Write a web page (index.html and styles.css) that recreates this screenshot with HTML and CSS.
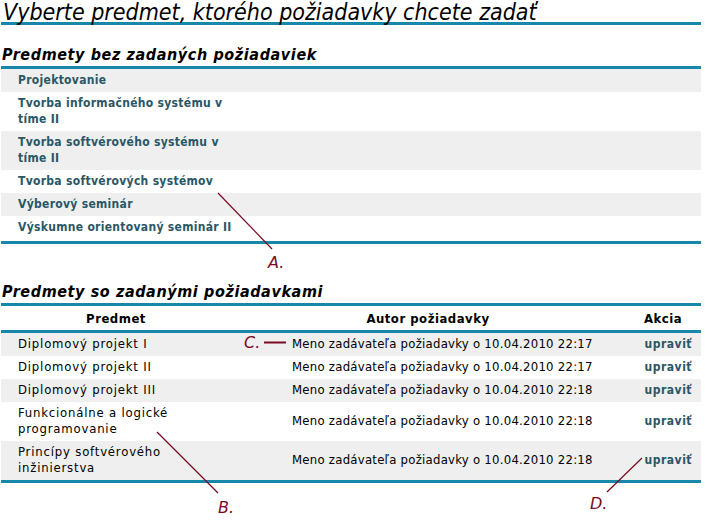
FILE: index.html
```html
<!DOCTYPE html>
<html lang="sk">
<head>
<meta charset="utf-8">
<title>Požiadavky</title>
<link rel="stylesheet" href="styles.css">
</head>
<body>
<div class="page">
  <h1 class="title">Vyberte predmet, ktorého požiadavky chcete zadať</h1>

  <h2 class="section">Predmety bez zadaných požiadaviek</h2>
  <table class="list">
    <tr class="odd"><td><a href="#">Projektovanie</a></td></tr>
    <tr><td><a href="#">Tvorba informačného systému v tíme II</a></td></tr>
    <tr class="odd"><td><a href="#">Tvorba softvérového systému v tíme II</a></td></tr>
    <tr><td><a href="#">Tvorba softvérových systémov</a></td></tr>
    <tr class="odd"><td><a href="#">Výberový seminár</a></td></tr>
    <tr class="last"><td><a href="#">Výskumne orientovaný seminár II</a></td></tr>
  </table>

  <h2 class="section second">Predmety so zadanými požiadavkami</h2>
  <table class="req">
    <thead>
      <tr><th class="c1">Predmet</th><th class="c2">Autor požiadavky</th><th class="c3">Akcia</th></tr>
    </thead>
    <tbody>
      <tr class="odd"><td class="c1">Diplomový projekt I</td><td class="c2">Meno zadávateľa požiadavky<span class="sp">o 10.04.2010 22:17</span></td><td class="c3"><a href="#">upraviť</a></td></tr>
      <tr><td class="c1">Diplomový projekt II</td><td class="c2">Meno zadávateľa požiadavky<span class="sp">o 10.04.2010 22:17</span></td><td class="c3"><a href="#">upraviť</a></td></tr>
      <tr class="odd"><td class="c1">Diplomový projekt III</td><td class="c2">Meno zadávateľa požiadavky<span class="sp">o 10.04.2010 22:18</span></td><td class="c3"><a href="#">upraviť</a></td></tr>
      <tr><td class="c1">Funkcionálne a logické programovanie</td><td class="c2">Meno zadávateľa požiadavky<span class="sp">o 10.04.2010 22:18</span></td><td class="c3"><a href="#">upraviť</a></td></tr>
      <tr class="odd"><td class="c1">Princípy softvérového inžinierstva</td><td class="c2">Meno zadávateľa požiadavky<span class="sp">o 10.04.2010 22:18</span></td><td class="c3"><a href="#">upraviť</a></td></tr>
    </tbody>
  </table>

  <svg class="notes" width="705" height="527" viewBox="0 0 705 527">
    <g stroke="#7a0a22" fill="none">
      <line x1="218" y1="193" x2="272" y2="249" stroke-width="1.2"/>
      <line x1="264" y1="342.5" x2="286" y2="342.5" stroke-width="2"/>
      <line x1="157" y1="432" x2="218" y2="493" stroke-width="1.2"/>
      <line x1="642" y1="458" x2="607" y2="492" stroke-width="1.2"/>
    </g>
  </svg>
  <span class="note n-a">A.</span>
  <span class="note n-b">B.</span>
  <span class="note n-c">C.</span>
  <span class="note n-d">D.</span>
</div>
</body>
</html>
```
FILE: styles.css
```css
html, body {
  margin: 0;
  padding: 0;
  background: #fff;
}
body {
  font-family: "DejaVu Sans Condensed", "DejaVu Sans", sans-serif;
  color: #000;
}
.page {
  position: relative;
  width: 705px;
  height: 527px;
}
.title {
  margin: 0 4px 0 1px;
  padding: 2px 0 0 2px;
  height: 20px;
  font-size: 23px;
  line-height: 20px;
  font-weight: normal;
  font-style: italic;
  border-bottom: 3px solid #1788aa;
}
.section {
  margin: 19px 4px 0 1px;
  padding: 0 0 0 1px;
  height: 22px;
  font-size: 16px;
  line-height: 22px;
  font-weight: bold;
  font-style: italic;
  letter-spacing: 0.6px;
  border-bottom: 3px solid #1788aa;
}
.section.second {
  margin-top: 37px;
  height: 22px;
}
table {
  border-collapse: collapse;
  border-spacing: 0;
}
.list {
  margin: 0 4px 0 1px;
  width: 700px;
  border-bottom: 3px solid #1788aa;
}
.list td {
  padding: 3px 2px 4px 17px;
  font-size: 12px;
  line-height: 16px;
  font-weight: bold;
  letter-spacing: 0.3px;
}
.list td a {
  display: block;
  width: 230px;
}
.list tr.odd td { background: #efefef; }
.list tr.last td { padding-bottom: 6px; }
a { color: #2a5766; text-decoration: none; }
.req {
  margin: 0 4px 0 1px;
  width: 700px;
  border-bottom: 3px solid #1788aa;
  font-size: 13px;
}
.req thead th {
  height: 24px;
  padding: 0;
  font-weight: bold;
  font-size: 13px;
  letter-spacing: 0.5px;
  text-align: center;
  border-bottom: 3px solid #1788aa;
}
.req tbody td {
  padding: 3px 0 4px;
  line-height: 16px;
  height: 16px;
}
.req tbody tr.odd td { background: #efefef; }
.req .c1 { width: 230px; }
.req td.c1 { padding-left: 17px; padding-right: 50px; width: 163px; letter-spacing: 0.8px; }
.req td.c2 { padding-left: 61px; width: 333px; letter-spacing: 0.25px; }
.req .sp { margin-left: 4px; }
.req .c3 { width: 76px; }
.req td.c3 { text-align: right; padding-right: 9px; width: 67px; }
.req td.c3 a { font-weight: bold; font-size: 12px; letter-spacing: 0.5px; }
.notes {
  position: absolute;
  left: 0;
  top: 0;
  pointer-events: none;
}
.note {
  position: absolute;
  font-family: "DejaVu Sans", sans-serif;
  font-style: italic;
  font-size: 16px;
  line-height: 16px;
  color: #7a0a22;
}
.n-a { left: 268px; top: 255px; }
.n-b { left: 218px; top: 500px; }
.n-c { left: 244px; top: 335px; }
.n-d { left: 590px; top: 496px; }
```
